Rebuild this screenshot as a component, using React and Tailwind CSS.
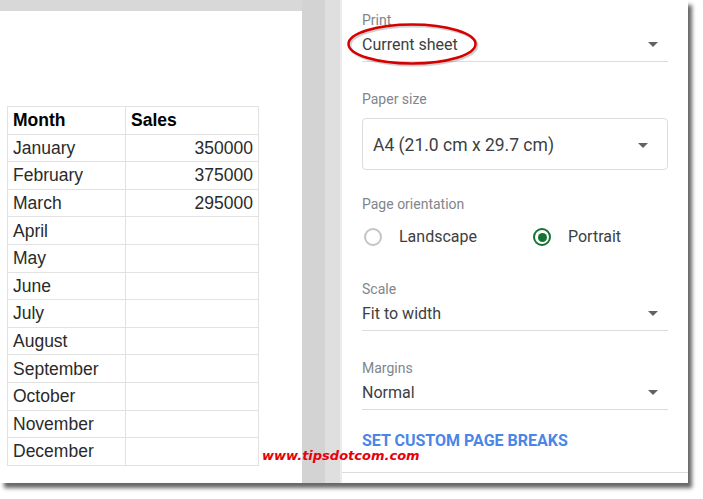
import React from 'react';

const rows = [
  ['January', '350000'],
  ['February', '375000'],
  ['March', '295000'],
  ['April', ''],
  ['May', ''],
  ['June', ''],
  ['July', ''],
  ['August', ''],
  ['September', ''],
  ['October', ''],
  ['November', ''],
  ['December', ''],
];

const Caret = () => (
  <svg width="10" height="5" viewBox="0 0 10 5">
    <path d="M0 0h10L5 5z" fill="#5f6368" />
  </svg>
);

const Select = ({ label, value, className }) => (
  <div className={className}>
    <div className="h-[16px] text-[14px] leading-[16px] text-[#80868b]">{label}</div>
    <div className="h-[34px] flex items-center justify-between border-b border-[#dadce0] pr-[10px]">
      <span className="text-[16px] text-[#3c4043]">{value}</span>
      <Caret />
    </div>
  </div>
);

const Radio = ({ checked, label }) => (
  <div className="flex items-center">
    <span
      className={
        checked
          ? 'w-[18px] h-[18px] rounded-full border-2 border-[#137333] flex items-center justify-center'
          : 'w-[18px] h-[18px] rounded-full border-2 border-[#c4c4c4]'
      }
    >
      {checked && <span className="w-[9px] h-[9px] rounded-full bg-[#137333]" />}
    </span>
    <span className="ml-[17px] text-[16px] text-[#3c4043]">{label}</span>
  </div>
);

export default function App() {
  return (
    <div className="w-[703px] h-[499px] bg-white overflow-hidden relative">
      {/* screenshot with drop shadow */}
      <div className="relative w-[688px] h-[483px] flex bg-[#d8d8d8] shadow-[4px_5px_4px_rgba(0,0,0,0.6)]">

        {/* sheet preview */}
        <div className="w-[302px] flex flex-col">
          <div className="h-[11px] shrink-0" />
          <div className="flex-1 bg-white pt-[95px] pl-[7px] font-['Liberation_Sans',Arial,sans-serif] text-[17.5px] text-[#2a2a2a]">
            <div className="w-[252px] grid grid-cols-[118px_133px] border-l border-t border-[#e2e2e2]">
              <div className="h-[27.6px] flex items-center pl-[5px] border-r border-b border-[#e2e2e2] font-bold text-black">Month</div>
              <div className="h-[27.6px] flex items-center pl-[5px] border-r border-b border-[#e2e2e2] font-bold text-black">Sales</div>
              {rows.map(([m, s]) => (
                <React.Fragment key={m}>
                  <div className="h-[27.6px] flex items-center pl-[5px] border-r border-b border-[#e2e2e2]">{m}</div>
                  <div className="h-[27.6px] flex items-center justify-end pr-[5px] border-r border-b border-[#e2e2e2]">{s}</div>
                </React.Fragment>
              ))}
            </div>
          </div>
        </div>

        {/* gutter */}
        <div className="w-[23px] bg-[#d3d3d3]" />
        <div className="w-[17px] bg-[#dfdfdf] border-r-2 border-[#ebebeb]" />

        {/* print settings panel */}
        <div className="w-[346px] bg-white flex flex-col font-['Roboto',sans-serif]">
          <div className="flex-1 px-[20px] pt-[12px]">
            <Select label="Print" value="Current sheet" />

            <div className="mt-[29px] h-[16px] text-[14px] leading-[16px] text-[#80868b]">Paper size</div>
            <div className="mt-[11px] h-[52px] rounded-[4px] border border-[#dadce0] flex items-center justify-between pl-[10px] pr-[19px] pt-[3px]">
              <span className="text-[17.5px] text-[#3c4043]">A4 (21.0 cm x 29.7 cm)</span>
              <Caret />
            </div>

            <div className="mt-[26px] h-[16px] text-[14px] leading-[16px] text-[#80868b]">Page orientation</div>
            <div className="mt-[13px] h-[24px] flex items-center pl-[2px]">
              <div className="w-[169px]">
                <Radio label="Landscape" />
              </div>
              <Radio checked label="Portrait" />
            </div>

            <Select className="mt-[32px]" label="Scale" value="Fit to width" />
            <Select className="mt-[29px]" label="Margins" value="Normal" />

            <div className="mt-[21px] h-[20px] flex items-center text-[16px] font-bold text-[#4a86e8]">
              SET CUSTOM PAGE BREAKS
            </div>
          </div>
          <div className="h-[11px] border-t border-[#dadce0] shrink-0" />
        </div>

        {/* red highlight ellipse */}
        <svg className="absolute left-[346px] top-[22px]" width="134" height="46" viewBox="0 0 134 46">
          <ellipse cx="67.5" cy="23.5" rx="63.5" ry="19.5" fill="none" stroke="rgba(0,0,0,0.18)" strokeWidth="3" />
          <ellipse cx="66" cy="22" rx="63.5" ry="19.5" fill="none" stroke="#d60000" strokeWidth="2.5" />
        </svg>

        {/* watermark */}
        <div className="absolute left-[262px] top-[446px] font-['DejaVu_Sans',Verdana,sans-serif] font-bold italic text-[13px] text-[#e8000b]">
          www.tipsdotcom.com
        </div>
      </div>
    </div>
  );
}
